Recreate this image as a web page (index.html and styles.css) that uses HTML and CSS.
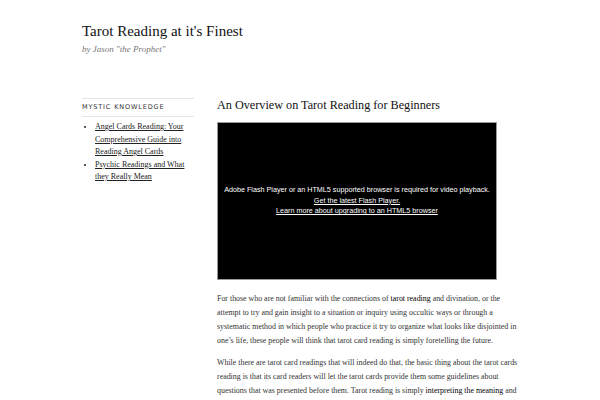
FILE: index.html
```html
<!DOCTYPE html>
<html>
<head>
<meta charset="utf-8">
<link rel="stylesheet" href="styles.css">
</head>
<body>
<div class="page">
  <header class="masthead">
    <h1 class="site-title">Tarot Reading at it's Finest</h1>
    <p class="tagline">by Jason "the Prophet"</p>
  </header>
  <div class="layout">
    <aside class="sidebar">
      <h3 class="widget-title">Mystic Knowledge</h3>
      <ul class="widget-list">
        <li><a href="#">Angel Cards Reading: Your Comprehensive Guide into Reading Angel Cards</a></li>
        <li><a href="#">Psychic Readings and What they Really Mean</a></li>
      </ul>
    </aside>
    <main class="content">
      <h2 class="entry-title">An Overview on Tarot Reading for Beginners</h2>
      <div class="video">
        <div class="video-msg">
          <div>Adobe Flash Player or an HTML5 supported browser is required for video playback.</div>
          <div><a href="#">Get the latest Flash Player.</a></div>
          <div><a href="#">Learn more about upgrading to an HTML5 browser</a></div>
        </div>
      </div>
      <p class="para">For those who are not familiar with the connections of <strong>tarot reading</strong> and divination, or the attempt to try and gain insight to a situation or inquiry using occultic ways or through a systematic method in which people who practice it try to organize what looks like disjointed in one’s life, these people will think that tarot card reading is simply foretelling the future.</p>
      <p class="para">While there are tarot card readings that will indeed do that, the basic thing about the tarot cards reading is that its card readers will let the tarot cards provide them some guidelines about questions that was presented before them. Tarot reading is simply <strong>interpreting the meaning</strong> and what the cards are trying to tell the reader about the person who asked the question.</p>
    </main>
  </div>
</div>
</body>
</html>
```

FILE: styles.css
```css
html, body {
  margin: 0;
  padding: 0;
  background: #fff;
}
body {
  font-family: "Liberation Serif", "Times New Roman", serif;
  color: #222;
}
.page {
  padding: 21px 0 0 82px;
}
.masthead {
  margin: 0 0 43px 0;
}
.site-title {
  font-size: 15px;
  font-weight: normal;
  margin: 0;
  line-height: 20px;
  color: #111;
}
.tagline {
  margin: 2px 0 0 0;
  font-size: 9px;
  font-style: italic;
  color: #777;
  line-height: 12px;
}
.layout {
  display: flex;
  gap: 23px;
}
.sidebar {
  width: 112px;
  flex: none;
}
.widget-title {
  margin: 0;
  padding: 5px 0 6px 0;
  border-top: 1px solid #e6e6e6;
  border-bottom: 1px solid #e6e6e6;
  font-family: "DejaVu Sans", sans-serif;
  font-weight: normal;
  font-size: 6.5px;
  letter-spacing: 0.85px;
  text-transform: uppercase;
  color: #333;
  line-height: 6px;
}
.widget-list {
  margin: 4px 0 0 0;
  padding: 0 0 0 13px;
  font-size: 8px;
  line-height: 12.5px;
}
.widget-list a {
  color: #222;
  text-decoration: underline;
}
.content {
  width: 305px;
  flex: none;
}
.entry-title {
  margin: 0;
  font-size: 12.2px;
  font-weight: normal;
  color: #111;
  line-height: 14px;
}
.video {
  margin-top: 10px;
  width: 278px;
  height: 156px;
  background: #000;
  border: 1px solid #999;
  display: flex;
  align-items: center;
  justify-content: center;
}
.video-msg {
  font-family: "Liberation Sans", Arial, sans-serif;
  font-size: 7.2px;
  line-height: 10.5px;
  color: #fff;
  text-align: center;
}
.video-msg a {
  color: #fff;
  text-decoration: underline;
}
.para {
  margin: 12px 0 0 0;
  font-size: 7.9px;
  line-height: 14px;
  color: #333;
}
.para + .para {
  margin-top: 8px;
}
.para strong {
  font-weight: normal;
  color: #000;
}
```
